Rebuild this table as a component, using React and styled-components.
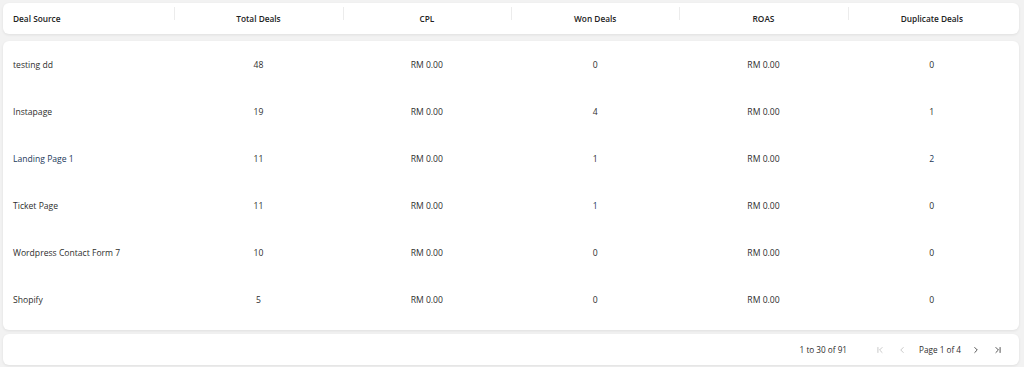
import React from 'react';
import styled, { createGlobalStyle } from 'styled-components';
import { ChevronFirst, ChevronLeft, ChevronRight, ChevronLast } from 'lucide-react';

const GlobalStyle = createGlobalStyle`
  html, body {
    margin: 0;
    padding: 0;
    background: #f2f2f2;
  }
  body {
    font-family: "Open Sans", "Noto Sans", Arial, sans-serif;
    color: #333;
  }
`;

const Page = styled.div`
  width: 1024px;
  height: 367px;
  box-sizing: border-box;
  padding: 3px 5px 0 3px;
  display: flex;
  flex-direction: column;
`;

const Card = styled.div`
  background: #fff;
  border-radius: 6px;
  box-shadow: 0 1px 3px rgba(0, 0, 0, 0.08);
`;

const HeaderCard = styled(Card)`
  height: 31px;
  padding: 0 3px;
  display: grid;
  grid-template-columns: repeat(6, 1fr);
  align-items: center;
`;

const HeadCell = styled.div`
  position: relative;
  font-size: 8.3px;
  font-weight: 600;
  color: #222;
  text-align: ${p => (p.$first ? 'left' : 'center')};
  padding-left: ${p => (p.$first ? '7px' : '0')};

  &::before {
    content: '';
    display: ${p => (p.$first ? 'none' : 'block')};
    position: absolute;
    left: 0;
    top: -6px;
    height: 13px;
    border-left: 1px solid #ececec;
  }
`;

const BodyCard = styled(Card)`
  margin-top: 7px;
  height: 289px;
  box-sizing: border-box;
  padding: 0 3px 7px;
`;

const Row = styled.div`
  height: 47px;
  display: grid;
  grid-template-columns: repeat(6, 1fr);
  align-items: center;
`;

const Cell = styled.div`
  font-size: 8.6px;
  color: ${p => (p.$link ? '#22395a' : '#2e2e2e')};
  text-align: ${p => (p.$first ? 'left' : 'center')};
  padding-left: ${p => (p.$first ? '7px' : '0')};
`;

const FooterCard = styled(Card)`
  margin-top: 4px;
  height: 31px;
  display: flex;
  align-items: center;
  justify-content: flex-end;
  padding-right: 10px;
  font-size: 8.2px;
  color: #2e2e2e;
`;

const Summary = styled.span`
  margin-right: 22px;
`;

const NavButton = styled.span`
  display: inline-flex;
  align-items: center;
  justify-content: center;
  width: 12px;
  color: ${p => (p.$disabled ? '#a8a8a8' : '#333')};
  margin: 0 5px;
`;

const PageLabel = styled.span`
  margin: 0 4px 0 6px;
`;

const columns = ['Deal Source', 'Total Deals', 'CPL', 'Won Deals', 'ROAS', 'Duplicate Deals'];

const rows = [
  { source: 'testing dd', total: '48', cpl: 'RM 0.00', won: '0', roas: 'RM 0.00', dup: '0' },
  { source: 'Instapage', total: '19', cpl: 'RM 0.00', won: '4', roas: 'RM 0.00', dup: '1' },
  { source: 'Landing Page 1', total: '11', cpl: 'RM 0.00', won: '1', roas: 'RM 0.00', dup: '2', link: ['source', 'dup'] },
  { source: 'Ticket Page', total: '11', cpl: 'RM 0.00', won: '1', roas: 'RM 0.00', dup: '0', link: ['won'] },
  { source: 'Wordpress Contact Form 7', total: '10', cpl: 'RM 0.00', won: '0', roas: 'RM 0.00', dup: '0' },
  { source: 'Shopify', total: '5', cpl: 'RM 0.00', won: '0', roas: 'RM 0.00', dup: '0' },
];

const keys = ['source', 'total', 'cpl', 'won', 'roas', 'dup'];

export default function App() {
  return (
    <>
      <GlobalStyle />
      <Page>
        <HeaderCard>
          {columns.map((c, i) => (
            <HeadCell key={c} $first={i === 0}>{c}</HeadCell>
          ))}
        </HeaderCard>
        <BodyCard>
          {rows.map(r => (
            <Row key={r.source}>
              {keys.map((k, i) => (
                <Cell key={k} $first={i === 0} $link={r.link && r.link.includes(k)}>
                  {r[k]}
                </Cell>
              ))}
            </Row>
          ))}
        </BodyCard>
        <FooterCard>
          <Summary>1 to 30 of 91</Summary>
          <NavButton $disabled><ChevronFirst size={10} strokeWidth={1.5} /></NavButton>
          <NavButton $disabled><ChevronLeft size={10} strokeWidth={1.5} /></NavButton>
          <PageLabel>Page 1 of 4</PageLabel>
          <NavButton><ChevronRight size={10} strokeWidth={2} /></NavButton>
          <NavButton><ChevronLast size={10} strokeWidth={2} /></NavButton>
        </FooterCard>
      </Page>
    </>
  );
}
